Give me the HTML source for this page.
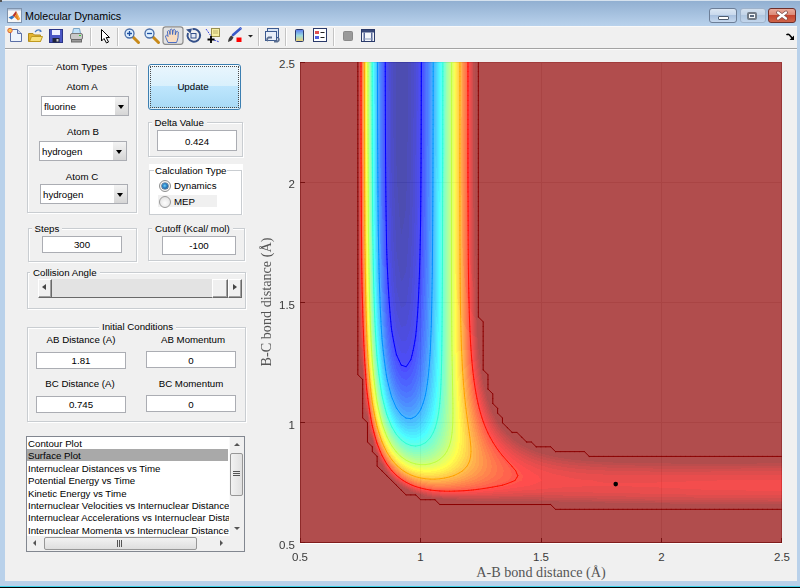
<!DOCTYPE html>
<html><head><meta charset="utf-8">
<style>
*{margin:0;padding:0;box-sizing:border-box}
html,body{width:800px;height:588px;overflow:hidden;background:#f0f0f0;font-family:"Liberation Sans",sans-serif;}
div,span,svg,canvas{position:absolute}
.t{white-space:nowrap;font-size:9.7px;line-height:12px;color:#000}
.c{text-align:center}
.grp{border:1px solid #c9cdd1;box-shadow:inset 1px 1px 0 #fff,1px 1px 0 #fff}
.gt{background:#f0f0f0;padding:0 3px}
.edit{background:#fff;border:1px solid #abadb3}
.edit .t{left:0;right:0;text-align:center}
.pop{background:#fff;border:1px solid #abadb3}
.ar{right:0;top:0;width:13px;bottom:0;background:linear-gradient(#f3f3f3,#d6d6d6)}
.ar:after{content:"";position:absolute;left:3px;top:8px;border-left:3.5px solid transparent;border-right:3.5px solid transparent;border-top:4px solid #000}
.tick{font-size:11.5px;color:#3a3a3a;line-height:12px;white-space:nowrap}
.b3d{background:#f0f0f0;border-top:1px solid #fff;border-left:1px solid #fff;border-right:1px solid #696969;border-bottom:1px solid #696969;box-shadow:inset -1px -1px 0 #a0a0a0}
.sep{top:28px;width:1px;height:19px;background:#c5c5c5;box-shadow:1px 0 0 #fff}
</style></head><body>
<!-- window frame -->
<div style="left:0;top:0;width:800px;height:588px;background:#b9d1ea"></div>
<div style="left:0;top:0;width:800px;height:26px;background:linear-gradient(#90aed0,#b9d2ec)"></div>
<div style="left:0;top:0;width:800px;height:1px;background:#d6e2ee"></div>
<div style="left:0;top:0;width:2px;height:2px;background:#555"></div>
<div style="left:0;top:586px;width:800px;height:1px;background:#3dd2ea"></div>
<div style="left:0;top:587px;width:800px;height:1px;background:#000"></div>
<!-- title -->
<svg style="left:7px;top:8px" width="15" height="15" viewBox="0 0 15 15">
<rect x="0.5" y="0.5" width="14" height="14" fill="#f6f6f6" stroke="#7f93ad"/>
<rect x="1" y="1" width="13" height="1.5" fill="#b3c4da"/>
<path d="M1.5 9.5 L5.5 7.5 L7.5 9 L4.5 11.5 Z" fill="#2f74c0"/>
<path d="M5.5 7.5 L9 3 L10 5 L7.5 9 Z" fill="#b8342a"/>
<path d="M9 3 L13 11 L11 12.5 L8.5 10 L7.5 9 L10 5 Z" fill="#e8821e"/>
<path d="M9 3 L13 11 L11.5 11.8 Z" fill="#f4b04a"/>
</svg>
<div class="t" style="left:25px;top:9px;font-size:10.7px;line-height:14px;color:#000">Molecular Dynamics</div>
<!-- window buttons -->
<div style="left:709px;top:8px;width:28px;height:15px;border:1px solid #6d7f98;border-radius:3px;background:linear-gradient(#dbe7f4 0%,#c9d9ec 45%,#a9c1df 50%,#c5d8ee 100%)"></div>
<div style="left:718px;top:16px;width:11px;height:4px;background:#fff;border:1px solid #4f5d70;border-radius:1px"></div>
<div style="left:740px;top:8px;width:26px;height:15px;border:1px solid #9fb3cb;border-radius:3px;background:linear-gradient(#d3e0ee 0%,#c3d4e8 45%,#b0c7e0 50%,#c3d6ec 100%)"></div>
<div style="left:747px;top:11.5px;width:10px;height:8px;border:2px solid #727b86;background:#f4f6f8;border-radius:2px"></div><div style="left:750px;top:14.5px;width:4px;height:2px;background:#5a6a80"></div>
<div style="left:768px;top:8px;width:28px;height:15px;border:1px solid #6e2f2a;border-radius:3px;background:linear-gradient(#e9a99a 0%,#dc8a76 45%,#c6452e 50%,#d0654a 100%)"></div>
<svg style="left:775px;top:10px" width="14" height="11" viewBox="0 0 14 11"><path d="M3 2.5 L11 8.5 M11 2.5 L3 8.5" stroke="#7a4a46" stroke-width="3.6" stroke-linecap="round"/><path d="M3 2.5 L11 8.5 M11 2.5 L3 8.5" stroke="#fff" stroke-width="2.2" stroke-linecap="round"/></svg>
<!-- toolbar -->
<div style="left:5px;top:26px;width:792px;height:23px;background:#f0f0f0;border-top:1px solid #f9f9f9"></div>
<div style="left:5px;top:48px;width:792px;height:1px;background:#a3a3a3"></div>
<div style="left:5px;top:49px;width:792px;height:532px;background:#f0f0f0;border-top:1px solid #fcfcfc"></div>
<svg style="left:0;top:26px" width="400" height="22" viewBox="0 26 400 22">
<!-- new -->
<path d="M10.5 29.5 H17.5 L21.5 33.5 V41.5 H10.5 Z" fill="#eef4fc" stroke="#5b6fa6"/>
<path d="M17.5 29.5 V33.5 H21.5" fill="#c8d4ec" stroke="#5b6fa6"/>
<circle cx="10" cy="30.5" r="2.2" fill="#f6c850" stroke="#e0603a" stroke-width="1"/>
<!-- open -->
<path d="M28.5 33.5 H33 L34.5 35 H40.5 V41.5 H28.5 Z" fill="#e4b432" stroke="#b08a1c"/>
<path d="M29.5 41.5 L31.5 36.5 H42.5 L40.5 41.5 Z" fill="#f8e07a" stroke="#c09a20"/>
<path d="M35 32 Q38 28.5 41 31" fill="none" stroke="#4a7ac0" stroke-width="1.2"/>
<path d="M40 29.5 L42 31.5 L39.5 32.2Z" fill="#4a7ac0"/>
<!-- save -->
<rect x="49.5" y="29.5" width="13" height="13" fill="#4a56c4" stroke="#2a3588"/>
<rect x="52" y="30" width="8" height="5" fill="#eef0ff"/>
<rect x="52.5" y="38" width="7" height="4.5" fill="#20243a"/>
<rect x="56.5" y="39" width="2" height="2.5" fill="#ccc"/>
<!-- print -->
<path d="M73.5 28.5 H79.5 L80.5 33.5 H72.5Z" fill="#bfe0f8" stroke="#7aa6c8"/>
<rect x="70.5" y="33.5" width="12" height="6" rx="1.5" fill="#c8c8c8" stroke="#7a7a7a"/>
<rect x="71.5" y="39.5" width="10" height="2.5" fill="#9a9a9a" stroke="#6a6a6a"/>
<rect x="79" y="35" width="2" height="1" fill="#3c3"/>
<!-- sep -->
<rect x="90" y="28" width="1" height="18" fill="#c4c4c4"/><rect x="91" y="28" width="1" height="18" fill="#fff"/>
<!-- pointer -->
<path d="M101.5 29.5 V41 L104 38.5 L106.5 43 L108.5 42 L106.2 37.5 H109.5 Z" fill="#fff" stroke="#000" stroke-linejoin="round"/>
<rect x="117" y="28" width="1" height="18" fill="#c4c4c4"/><rect x="118" y="28" width="1" height="18" fill="#fff"/>
<!-- zoom in -->
<path d="M133 37 L138.5 42.5" stroke="#c88a1a" stroke-width="3" stroke-linecap="round"/>
<circle cx="129.5" cy="33.5" r="4.5" fill="#dff0ff" stroke="#4a6ea8" stroke-width="1.3"/>
<path d="M127 33.5 H132 M129.5 31 V36" stroke="#2050a0" stroke-width="1.3"/>
<!-- zoom out -->
<path d="M153 37 L158.5 42.5" stroke="#c88a1a" stroke-width="3" stroke-linecap="round"/>
<circle cx="149.5" cy="33.5" r="4.5" fill="#dff0ff" stroke="#4a6ea8" stroke-width="1.3"/>
<path d="M147 33.5 H152" stroke="#2050a0" stroke-width="1.3"/>
<!-- pan pressed -->
<rect x="163" y="26.8" width="20" height="17.5" rx="2.5" fill="#e2e2e2" stroke="#8c8c8c" stroke-width="1.2"/>
<path d="M168 42.5 L165.8 37.5 Q165 35.5 166.5 35 L168 36.5 L167.4 31.5 Q168.3 29.8 169.6 31.3 L170 34.5 L170.2 29.8 Q171.2 28.3 172.3 29.8 L172.6 34.5 L173.2 30 Q174.3 28.6 175.3 30.2 L175.3 34.8 L176.2 31.8 Q177.3 30.6 178.3 32 L178 37.5 Q177.5 40.5 176.5 42.5 Z" fill="#f9dcc0" stroke="#3a62c0" stroke-width="0.9" stroke-linejoin="round"/>
<!-- rotate -->
<path d="M188 33 A6.3 6.3 0 1 0 192.5 29.2" fill="none" stroke="#34508a" stroke-width="2"/>
<path d="M186 29.5 L192 28.5 L190.5 33.5 Z" fill="#34508a"/>
<rect x="191" y="33.5" width="5" height="4.5" fill="#e4eaf6" stroke="#34508a" stroke-width="1"/>
<!-- data cursor -->
<rect x="211.5" y="28.5" width="8" height="8" fill="#f6eea0" stroke="#9a9050"/>
<path d="M213 31 H218 M213 33 H218" stroke="#b0a060" stroke-width="0.8"/>
<path d="M206 29 L211 36 M214 40 L219.5 42" stroke="#3a46e0" stroke-width="1" stroke-dasharray="2 1"/>
<path d="M207.5 39.5 H214.5 M211 36 V43" stroke="#000" stroke-width="1.8"/>
<!-- brush -->
<path d="M233 35 L240.5 28.5" stroke="#3a5ac8" stroke-width="2.6" stroke-linecap="round"/>
<path d="M240.5 28.5 L241.5 29.5" stroke="#9ab0f0" stroke-width="1"/>
<path d="M228 42 Q228.5 37 231.5 35.5 L233.5 37.5 Q232 41 228 42Z" fill="#3c3c3c"/>
<rect x="236.5" y="37.5" width="5" height="4.5" fill="#f00"/>
<path d="M248 35 H253 L250.5 37.5Z" fill="#222"/>
<rect x="258" y="28" width="1" height="18" fill="#c4c4c4"/><rect x="259" y="28" width="1" height="18" fill="#fff"/>
<!-- link -->
<rect x="267.5" y="28.5" width="11" height="9" fill="#d8e4f4" stroke="#3c5a90"/>
<rect x="265.5" y="31.5" width="11" height="9" fill="#e8eef8" stroke="#3c5a90"/>
<path d="M268 41 Q266 39 268.5 37.5 H272 M274 41.5 H277.5 Q280 40 278 38" fill="none" stroke="#5a6e90" stroke-width="1.8"/>
<rect x="285" y="28" width="1" height="18" fill="#c4c4c4"/><rect x="286" y="28" width="1" height="18" fill="#fff"/>
<!-- colorbar -->
<defs><linearGradient id="cb" x1="0" y1="0" x2="0" y2="1"><stop offset="0" stop-color="#5a7af0"/><stop offset="0.5" stop-color="#9ad8e0"/><stop offset="1" stop-color="#f0d070"/></linearGradient></defs>
<rect x="295.5" y="29.5" width="8" height="12" rx="1" fill="url(#cb)" stroke="#2a3a6a"/>
<!-- legend -->
<rect x="313.5" y="28.5" width="13" height="13" fill="#fff" stroke="#2a3a6a"/>
<rect x="315" y="31" width="4" height="3" fill="#e05050"/><rect x="315" y="36" width="4" height="3" fill="#5060e0"/>
<path d="M320.5 32.5 H324.5 M320.5 37.5 H324.5" stroke="#222"/>
<rect x="333" y="28" width="1" height="18" fill="#c4c4c4"/><rect x="334" y="28" width="1" height="18" fill="#fff"/>
<!-- hide tools -->
<rect x="343.5" y="31.5" width="9" height="9" rx="1" fill="#9a9a9a" stroke="#8a8a8a"/>
<!-- show tools -->
<rect x="361.5" y="29.5" width="13" height="12" fill="#f4f6fa" stroke="#2a3a6a"/>
<rect x="362" y="30" width="12" height="2.5" fill="#3a4a7a"/>
<rect x="363.5" y="32.5" width="1.5" height="8.5" fill="#5a6a9a"/><rect x="371" y="32.5" width="1.5" height="8.5" fill="#5a6a9a"/>
<rect x="363" y="38.5" width="10" height="1" fill="#8a9aba"/>
</svg>
<svg style="left:784px;top:32px" width="12" height="10" viewBox="0 0 12 10"><path d="M2.5 3 Q4 1.5 5.5 3 L8.5 6.5" fill="none" stroke="#000" stroke-width="1.6"/><path d="M10 3.5 V8 H5.5Z" fill="#000"/></svg>

<!-- Atom types -->
<div class="grp" style="left:27px;top:65px;width:110px;height:148px"></div>
<div class="t gt" style="left:53px;top:61px">Atom Types</div>
<div class="t c" style="left:52px;top:81px;width:60px">Atom A</div>
<div class="pop" style="left:41px;top:96px;width:88px;height:20px"><div class="t" style="left:2px;top:4px">fluorine</div><div class="ar"></div></div>
<div class="t c" style="left:53px;top:126px;width:60px">Atom B</div>
<div class="pop" style="left:39px;top:141px;width:88px;height:20px"><div class="t" style="left:2px;top:4px">hydrogen</div><div class="ar"></div></div>
<div class="t c" style="left:52px;top:171px;width:60px">Atom C</div>
<div class="pop" style="left:40px;top:184px;width:88px;height:20px"><div class="t" style="left:2px;top:4px">hydrogen</div><div class="ar"></div></div>
<!-- update -->
<div style="left:148px;top:64px;width:93px;height:46px;border:1px solid #3c7fb1;border-radius:3px;background:linear-gradient(#eaf6fd 0%,#d9f0fc 47%,#bee6fd 48%,#a7d9f5 100%);box-shadow:inset 0 0 0 1px rgba(255,255,255,0.6)"></div>
<div style="left:150px;top:66px;width:89px;height:42px;border:1px dotted #4a4a4a"></div>
<div class="t c" style="left:163px;top:81px;width:60px">Update</div>
<!-- delta -->
<div class="grp" style="left:148px;top:122px;width:95px;height:35px"></div>
<div class="t gt" style="left:151.5px;top:117px">Delta Value</div>
<div class="edit" style="left:157px;top:130px;width:80px;height:21px"><div class="t" style="top:5px">0.424</div></div>
<!-- calc type -->
<div style="left:149px;top:164px;width:94px;height:51px;background:#fff"></div>
<div class="grp" style="left:149px;top:170px;width:93px;height:45px;box-shadow:none"></div>
<div class="t" style="left:154px;top:165px;background:#fff;padding:0 1px">Calculation Type</div>
<div style="left:158px;top:195px;width:59px;height:12px;background:#f0f0f0"></div>
<div style="left:159px;top:180px;width:12px;height:12px;border-radius:50%;border:1px solid #8e8f8f;background:radial-gradient(circle,#e8e8e8 0,#f8f8f8 60%,#dcdcdc 100%)"></div>
<div style="left:162px;top:183px;width:6px;height:6px;border-radius:50%;background:radial-gradient(circle at 45% 45%,#6fd0f8 0,#2378be 50%,#12406e 100%);box-shadow:0 0 0 0.6px #2a4a6a"></div>
<div class="t" style="left:174px;top:180px">Dynamics</div>
<div style="left:159px;top:196px;width:12px;height:12px;border-radius:50%;border:1px solid #9a9a9a;background:radial-gradient(circle at 50% 60%,#fdfdfd 0,#dcdcdc 100%)"></div>
<div class="t" style="left:174px;top:196px">MEP</div>
<!-- steps -->
<div class="grp" style="left:28px;top:228px;width:109px;height:34px"></div>
<div class="t gt" style="left:31.5px;top:223px">Steps</div>
<div class="edit" style="left:42px;top:236px;width:80px;height:17px"><div class="t" style="top:2px">300</div></div>
<!-- cutoff -->
<div class="grp" style="left:148px;top:228px;width:97px;height:33px"></div>
<div class="t gt" style="left:152px;top:223px">Cutoff (Kcal/ mol)</div>
<div class="edit" style="left:162px;top:236px;width:74px;height:19px"><div class="t" style="top:3px">-100</div></div>
<!-- collision angle -->
<div class="grp" style="left:27px;top:272px;width:219px;height:37px"></div>
<div class="t gt" style="left:30px;top:267px">Collision Angle</div>
<div style="left:38px;top:279px;width:204px;height:19px;background:#e3e3e3;border-bottom:1px solid #696969"></div>
<div class="b3d" style="left:38px;top:279px;width:14px;height:19px"></div>
<div style="left:42px;top:284px;border-top:3.5px solid transparent;border-bottom:3.5px solid transparent;border-right:4px solid #444"></div>
<div class="b3d" style="left:212px;top:279px;width:16px;height:19px"></div>
<div class="b3d" style="left:228px;top:279px;width:14px;height:19px"></div>
<div style="left:233px;top:284px;border-top:3.5px solid transparent;border-bottom:3.5px solid transparent;border-left:4px solid #444"></div>
<!-- initial conditions -->
<div class="grp" style="left:27px;top:327px;width:219px;height:95px"></div>
<div class="t gt" style="left:99px;top:321px">Initial Conditions</div>
<div class="t c" style="left:31px;top:334px;width:100px">AB Distance (A)</div>
<div class="t c" style="left:143px;top:334px;width:100px">AB Momentum</div>
<div class="edit" style="left:36px;top:352px;width:90px;height:17px"><div class="t" style="top:2px">1.81</div></div>
<div class="edit" style="left:146px;top:351px;width:90px;height:17px"><div class="t" style="top:3px">0</div></div>
<div class="t c" style="left:30px;top:378px;width:100px">BC Distance (A)</div>
<div class="t c" style="left:141px;top:378px;width:100px">BC Momentum</div>
<div class="edit" style="left:36px;top:396px;width:90px;height:17px"><div class="t" style="top:2px">0.745</div></div>
<div class="edit" style="left:146px;top:395px;width:90px;height:17px"><div class="t" style="top:3px">0</div></div>
<!-- listbox -->
<div style="left:26px;top:436px;width:219px;height:116px;background:#fff;border:1px solid #828790;overflow:hidden">
 <div style="left:0;top:12px;width:201px;height:12.4px;background:#a9a9a9"></div>
 <div class="t" style="left:1px;top:1px;line-height:12.4px;font-size:9.7px">Contour Plot<br>Surface Plot<br>Internuclear Distances vs Time<br>Potential Energy vs Time<br>Kinetic Energy vs Time<br>Internuclear Velocities vs Internuclear Distance<br>Internuclear Accelerations vs Internuclear Distance<br>Internuclear Momenta vs Internuclear Distance</div>
 <div style="left:202px;top:0;width:15px;height:99px;background:#f0f0f0;border-left:1px solid #fafafa"></div>
 <div style="left:0;top:99px;width:217px;height:15px;background:#f0f0f0"></div>
 <div style="left:207px;top:6px;border-left:3.5px solid transparent;border-right:3.5px solid transparent;border-bottom:3.5px solid #555"></div>
 <div style="left:207px;top:90px;border-left:3.5px solid transparent;border-right:3.5px solid transparent;border-top:3.5px solid #555"></div>
 <div style="left:203px;top:16px;width:13px;height:43px;border:1px solid #979797;border-radius:2px;background:linear-gradient(90deg,#f2f2f2,#e0e0e0)"></div>
 <div style="left:206px;top:34px;width:7px;height:1px;background:#555;box-shadow:0 2px 0 #555,0 4px 0 #555"></div>
 <div style="left:17px;top:100px;width:153px;height:13px;border:1px solid #979797;border-radius:2px;background:linear-gradient(#f2f2f2,#dedede)"></div>
 <div style="left:90px;top:103px;width:1px;height:7px;background:#555;box-shadow:2px 0 0 #555,4px 0 0 #555"></div>
 <div style="left:6px;top:103px;border-top:3.5px solid transparent;border-bottom:3.5px solid transparent;border-right:3.5px solid #555"></div>
 <div style="left:193px;top:103px;border-top:3.5px solid transparent;border-bottom:3.5px solid transparent;border-left:3.5px solid #555"></div>
</div>
<!-- plot -->
<div style="left:300px;top:62px;width:482px;height:481px;background:#b04d4d"></div>
<div style="left:358px;top:62px;width:120px;height:400px;border-radius:0 0 50px 50px;background:linear-gradient(90deg,#b04d4d 0,#ff4c4c 3px,#ffb24c 6px,#d2ff78 10px,#4cffe6 15px,#4cb4ff 20px,#4c4cff 27px,#4c4cb8 40px,#4c4cc8 46px,#4c4cff 63px,#4cb4ff 75px,#4cffe6 85px,#d2ff78 94px,#ffb24c 102px,#ff4c4c 110px,#b04d4d 120px)"></div>
<div style="left:400px;top:440px;width:382px;height:70px;background:linear-gradient(#b04d4d 0,#ff4c4c 45%,#ff4c4c 55%,#b04d4d 100%)"></div>
<canvas id="plot" width="482" height="481" style="left:300px;top:62px"></canvas>
<div style="left:300px;top:543px;width:482px;height:1px;background:#fff"></div>
<div class="tick" style="left:245px;width:50px;text-align:right;top:58.00px">2.5</div>
<div class="tick" style="left:245px;width:50px;text-align:right;top:178.25px">2</div>
<div class="tick" style="left:245px;width:50px;text-align:right;top:298.50px">1.5</div>
<div class="tick" style="left:245px;width:50px;text-align:right;top:418.75px">1</div>
<div class="tick" style="left:245px;width:50px;text-align:right;top:539.00px">0.5</div>
<div class="tick" style="left:280px;width:40px;text-align:center;top:550.5px">0.5</div>
<div class="tick" style="left:400.5px;width:40px;text-align:center;top:550.5px">1</div>
<div class="tick" style="left:521px;width:40px;text-align:center;top:550.5px">1.5</div>
<div class="tick" style="left:641.5px;width:40px;text-align:center;top:550.5px">2</div>
<div class="tick" style="left:762px;width:40px;text-align:center;top:550.5px">2.5</div>
<div style="left:441px;width:200px;text-align:center;top:563.5px;font-family:'Liberation Serif',serif;font-size:14.2px;line-height:16px;color:#555;white-space:nowrap">A-B bond distance (Å)</div>
<div style="left:165.85px;top:294.1px;width:200px;text-align:center;transform:rotate(-90deg);font-family:'Liberation Serif',serif;font-size:14.2px;line-height:16px;color:#555;white-space:nowrap">B-C bond distance (Å)</div>
<script>
(function(){
var LW=1.0,TOP=62;
var P=[133.95724,0.92194,2.27212,104.02329,0.73868,1.97259,0.17974,0.18116];
function QJ(r,D,re,b,k){var e=Math.exp(-b*(r-re));var E1=D*(e*e-2*e),E3=D/2*(e*e+2*e);return [(E1*(1+k)+E3*(1-k))/2/(1+k),(E1*(1+k)-E3*(1-k))/2/(1+k)];}
function V(ab,bc){var a=QJ(ab,P[0],P[1],P[2],P[6]),b=QJ(bc,P[3],P[4],P[5],P[7]),c=QJ(ab+bc,P[0],P[1],P[2],P[6]);
 return a[0]+b[0]+c[0]-Math.sqrt(0.5*((a[1]-b[1])*(a[1]-b[1])+(b[1]-c[1])*(b[1]-c[1])+(c[1]-a[1])*(c[1]-a[1])));}
var N=101,G=new Float64Array(N*N),cmin=1e9,cmax=-100;
for(var r=0;r<N;r++)for(var c=0;c<N;c++){var v=V(0.5+0.02*c,0.5+0.02*r);if(v>-100)v=-100;G[r*N+c]=v;if(v<cmin)cmin=v;}
// jet64
var m=64,n=16,J=[];for(var i=0;i<m;i++)J.push([0,0,0]);
var u=[];for(i=1;i<=n;i++)u.push(i/n);for(i=0;i<n-1;i++)u.push(1);for(i=n;i>=1;i--)u.push(i/n);
for(i=0;i<u.length;i++){var g=8+i+1,rr=g+n,bb=g-n;if(rr<=m)J[rr-1][0]=u[i];if(g<=m)J[g-1][1]=u[i];if(bb>0)J[bb-1][2]=u[i];}
var cv=document.getElementById('plot'),ctx=cv.getContext('2d'),W=cv.width,H=cv.height;
var A=0.7;
function X(x){return (x-0.5)*241;}function Y(y){return (2.5-y)*240.5;}
ctx.fillStyle='#fff';ctx.fillRect(0,0,W,H);
// grid
ctx.fillStyle='rgb(228,228,228)';
[1,1.5,2].forEach(function(g){ctx.fillRect(Math.floor(X(g)),0,1,H);ctx.fillRect(0,Math.floor(Y(g)),W,1);});
// axes
ctx.fillStyle='rgb(140,140,140)';ctx.fillRect(0,0,1,H);
ctx.fillStyle='rgb(93,93,93)';ctx.fillRect(0,H-1,W,1);
ctx.fillStyle='rgb(175,175,175)';ctx.fillRect(W-1,0,1,H);
ctx.fillStyle='rgb(200,200,200)';ctx.fillRect(0,0,W,1);
ctx.fillStyle='rgb(60,60,60)';
[0.5,1,1.5,2,2.5].forEach(function(t){ctx.fillRect(0,Math.min(H-1,Math.floor(Y(t))),5,1);ctx.fillRect(Math.min(W-1,Math.floor(X(t))),H-5,1,5);});
var levels=[-130,-125,-120,-115,-110,-105,-100];
ctx.lineWidth=LW;ctx.lineCap='round';ctx.lineJoin='round';
levels.forEach(function(L){
 var idx=Math.floor((L-cmin)/(cmax-cmin)*m);if(idx>m-1)idx=m-1;var col=J[idx];
 ctx.strokeStyle='rgb('+Math.round(col[0]*255)+','+Math.round(col[1]*255)+','+Math.round(col[2]*255)+')';
 ctx.beginPath();
 for(var r=0;r<N-1;r++)for(var c=0;c<N-1;c++){
  var a=G[r*N+c],b=G[r*N+c+1],e=G[(r+1)*N+c+1],f=G[(r+1)*N+c];
  var x0=0.5+0.02*c,y0=0.5+0.02*r,pts=[];
  function ed(v1,v2,x1,y1,x2,y2){if((v1<L)!=(v2<L)){var t=(L-v1)/(v2-v1);pts.push([x1+(x2-x1)*t,y1+(y2-y1)*t]);}}
  ed(a,b,x0,y0,x0+0.02,y0);ed(b,e,x0+0.02,y0,x0+0.02,y0+0.02);ed(e,f,x0+0.02,y0+0.02,x0,y0+0.02);ed(f,a,x0,y0+0.02,x0,y0);
  if(pts.length>=2){ctx.moveTo(X(pts[0][0]),Y(pts[0][1]));ctx.lineTo(X(pts[1][0]),Y(pts[1][1]));}
  if(pts.length==4){ctx.moveTo(X(pts[2][0]),Y(pts[2][1]));ctx.lineTo(X(pts[3][0]),Y(pts[3][1]));}
 }
 ctx.stroke();
});
var img=ctx.getImageData(0,0,W,H),d=img.data;
for(var j=0;j<H;j++){var y=2.5-(j+0.5)/240.5;var fr=(y-0.5)/0.02,r0=Math.floor(fr);if(r0<0)r0=0;if(r0>N-2)r0=N-2;var tr=fr-r0;
 for(var i=0;i<W;i++){var x=0.5+(i+0.5)/241;var fc=(x-0.5)/0.02,c0=Math.floor(fc);if(c0<0)c0=0;if(c0>N-2)c0=N-2;var tc=fc-c0;
  var v00=G[r0*N+c0],v01=G[r0*N+c0+1],v10=G[(r0+1)*N+c0],v11=G[(r0+1)*N+c0+1];
  var v=(v00*(1-tc)+v01*tc)*(1-tr)+(v10*(1-tc)+v11*tc)*tr;
  var idx=Math.floor((v-cmin)/(cmax-cmin)*m);if(idx>TOP)idx=TOP;if(idx<0)idx=0;
  var col=J[idx],o=(j*W+i)*4;
  d[o]=A*col[0]*255+(1-A)*d[o];d[o+1]=A*col[1]*255+(1-A)*d[o+1];d[o+2]=A*col[2]*255+(1-A)*d[o+2];d[o+3]=255;
 }}
ctx.putImageData(img,0,0);
ctx.fillStyle='#000';ctx.beginPath();ctx.arc(X(1.81),Y(0.745),2.3,0,Math.PI*2);ctx.fill();
})();
</script>
</body></html>
